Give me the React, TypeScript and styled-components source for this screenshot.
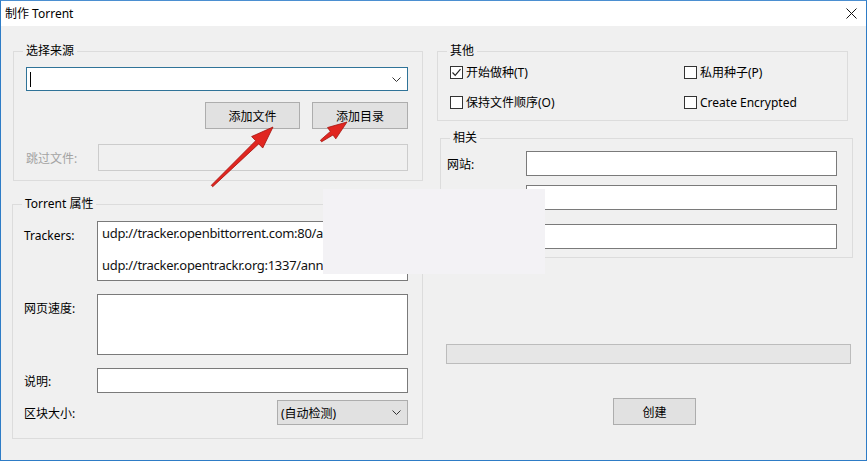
import React from 'react';
import styled, { createGlobalStyle } from 'styled-components';

const GlobalStyle = createGlobalStyle`
  html, body {
    margin: 0;
    padding: 0;
    background: #ffffff;
  }
  * {
    box-sizing: border-box;
  }
`;

const font = `"Segoe UI", "Noto Sans", "Noto Sans CJK SC", sans-serif`;

const Window = styled.div`
  position: relative;
  width: 867px;
  height: 461px;
  border: 1px solid #2e7cc6;
  border-top-color: #4b8fd1;
  background: #f0f0f0;
  font-family: ${font};
  font-size: 12px;
  color: #000;
  display: flex;
  flex-direction: column;
  overflow: hidden;
`;

const TitleBar = styled.div`
  height: 25px;
  flex: none;
  background: #ffffff;
  display: flex;
  align-items: center;
  justify-content: space-between;
  padding: 0 9px 1px 4px;
  font-size: 12px;
`;

const Body = styled.div`
  flex: 1;
  display: flex;
  padding: 17px 0 0 11px;
`;

const LeftColumn = styled.div`
  width: 411px;
  display: flex;
  flex-direction: column;
`;

const RightColumn = styled.div`
  width: 416px;
  margin-left: 14px;
  display: flex;
  flex-direction: column;
`;

const Group = styled.fieldset<{ $mt?: number; $ml?: number; $mr?: number }>`
  margin: ${p => p.$mt ?? 0}px ${p => p.$mr ?? 0}px 0 ${p => p.$ml ?? 0}px;
  padding: 0;
  border: 1px solid #dcdcdc;
  min-width: 0;
`;

const Legend = styled.legend`
  margin-left: 9px;
  padding: 0 3px;
  line-height: 16px;
  height: 16px;
  font-size: 12px;
`;

const GroupBody = styled.div<{ $pad: string }>`
  padding: ${p => p.$pad};
  display: flex;
  flex-direction: column;
`;

const Row = styled.div<{ $mt?: number; $align?: string; $justify?: string }>`
  display: flex;
  align-items: ${p => p.$align ?? 'center'};
  justify-content: ${p => p.$justify ?? 'flex-start'};
  margin-top: ${p => p.$mt ?? 0}px;
`;

const Label = styled.div<{ $w: number; $disabled?: boolean; $pt?: number }>`
  width: ${p => p.$w}px;
  flex: none;
  color: ${p => (p.$disabled ? '#a3a3a3' : '#000')};
  padding-top: ${p => p.$pt ?? 0}px;
  white-space: nowrap;
`;

const Combo = styled.div`
  height: 24px;
  background: #fff;
  border: 1px solid #2f7398;
  display: flex;
  align-items: center;
  justify-content: space-between;
  padding: 0 6px 0 3px;
`;

const Caret = styled.span`
  width: 1px;
  height: 15px;
  background: #000;
`;

const TextBox = styled.div<{ $h: number; $disabled?: boolean }>`
  flex: 1;
  height: ${p => p.$h}px;
  background: ${p => (p.$disabled ? '#f0f0f0' : '#fff')};
  border: 1px solid ${p => (p.$disabled ? '#cccccc' : '#7a7a7a')};
  overflow: hidden;
`;

const TrackerText = styled.div`
  padding: 3px 4px;
  font-size: 13px;
  letter-spacing: -0.3px;
  line-height: 16px;
  white-space: nowrap;
  color: #111;
`;

const TrackerGap = styled.div`
  height: 16px;
`;

const Button = styled.button<{ $w: number; $ml?: number }>`
  width: ${p => p.$w}px;
  height: 27px;
  margin-left: ${p => p.$ml ?? 0}px;
  background: #e1e1e1;
  border: 1px solid #adadad;
  font-family: ${font};
  font-size: 12px;
  color: #000;
  padding: 0;
`;

const Select = styled.div`
  width: 131px;
  height: 25px;
  background: #e1e1e1;
  border: 1px solid #adadad;
  display: flex;
  align-items: center;
  justify-content: space-between;
  padding: 0 6px 0 3px;
`;

const CheckGrid = styled.div`
  display: grid;
  grid-template-columns: 234px 1fr;
  grid-auto-rows: 20px;
  row-gap: 10px;
  padding: 3px 0 8px 12px;
`;

const CheckItem = styled.label`
  display: flex;
  align-items: center;
  gap: 3px;
  white-space: nowrap;
`;

const CheckBox = styled.span`
  width: 13px;
  height: 13px;
  border: 1px solid #333;
  background: #fff;
  display: flex;
  align-items: center;
  justify-content: center;
`;

const Progress = styled.div`
  margin: 86px 0 0 9px;
  width: 405px;
  height: 20px;
  background: #e6e6e6;
  border: 1px solid #bcbcbc;
`;

const Overlay = styled.div`
  position: absolute;
  left: 322px;
  top: 188px;
  width: 222px;
  height: 85px;
  background: #f3f2f5;
`;

const ArrowLayer = styled.svg`
  position: absolute;
  left: 0;
  top: 0;
  width: 865px;
  height: 459px;
  pointer-events: none;
`;

const Chevron = () => (
  <svg width="9" height="5" viewBox="0 0 9 5">
    <path d="M0.5 0.5 L4.5 4.5 L8.5 0.5" fill="none" stroke="#333" strokeWidth="1" />
  </svg>
);

const Check = ({ checked, text }: { checked?: boolean; text: string }) => (
  <CheckItem>
    <CheckBox>
      {checked && (
        <svg width="11" height="11" viewBox="0 0 11 11">
          <path d="M1.5 5.5 L4.2 8.3 L9.5 2.2" fill="none" stroke="#222" strokeWidth="1.2" />
        </svg>
      )}
    </CheckBox>
    {text}
  </CheckItem>
);

// tail -> tip arrow drawn as shaft + head
const Arrow = ({ tail, tip, head, half }: { tail: [number, number]; tip: [number, number]; head: number; half: number }) => {
  const dx = tip[0] - tail[0];
  const dy = tip[1] - tail[1];
  const len = Math.hypot(dx, dy);
  const ux = dx / len;
  const uy = dy / len;
  const px = -uy;
  const py = ux;
  const bx = tip[0] - ux * head;
  const by = tip[1] - uy * head;
  const pts = [
    [tail[0] + px * 1, tail[1] + py * 1],
    [bx + px * 2.2, by + py * 2.2],
    [bx + px * half, by + py * half],
    [tip[0], tip[1]],
    [bx - px * half, by - py * half],
    [bx - px * 2.2, by - py * 2.2],
    [tail[0] - px * 1, tail[1] - py * 1],
  ]
    .map(p => p.join(','))
    .join(' ');
  return <polygon points={pts} fill="#e12620" stroke="#a3130e" strokeWidth="0.8" strokeLinejoin="round" />;
};

const App: React.FC = () => {
  return (
    <>
      <GlobalStyle />
      <Window>
        <TitleBar>
          <span>制作 Torrent</span>
          <svg width="11" height="11" viewBox="0 0 11 11">
            <path d="M0.5 0.5 L10.5 10.5 M10.5 0.5 L0.5 10.5" stroke="#111" strokeWidth="1" />
          </svg>
        </TitleBar>
        <Body>
          <LeftColumn>
            <Group $ml={1}>
              <Legend>选择来源</Legend>
              <GroupBody $pad="8px 14px 9px 12px">
                <Combo>
                  <Caret />
                  <Chevron />
                </Combo>
                <Row $mt={11} $justify="flex-end">
                  <Button $w={95}>添加文件</Button>
                  <Button $w={96} $ml={12}>添加目录</Button>
                </Row>
                <Row $mt={15}>
                  <Label $w={72} $disabled>跳过文件:</Label>
                  <TextBox $h={27} $disabled />
                </Row>
              </GroupBody>
            </Group>
            <Group $mt={15}>
              <Legend>Torrent 属性</Legend>
              <GroupBody $pad="9px 14px 13px 11px">
                <Row $align="flex-start">
                  <Label $w={73} $pt={6}>Trackers:</Label>
                  <TextBox $h={60}>
                    <TrackerText>
                      udp://tracker.openbittorrent.com:80/announce
                      <TrackerGap />
                      udp://tracker.opentrackr.org:1337/announce
                    </TrackerText>
                  </TextBox>
                </Row>
                <Row $mt={13} $align="flex-start">
                  <Label $w={73} $pt={5}>网页速度:</Label>
                  <TextBox $h={61} />
                </Row>
                <Row $mt={13}>
                  <Label $w={73}>说明:</Label>
                  <TextBox $h={25} />
                </Row>
                <Row $mt={7} $justify="space-between">
                  <Label $w={73}>区块大小:</Label>
                  <Select>
                    <span>(自动检测)</span>
                    <Chevron />
                  </Select>
                </Row>
              </GroupBody>
            </Group>
          </LeftColumn>
          <RightColumn>
            <Group $mr={5}>
              <Legend>其他</Legend>
              <CheckGrid>
                <Check checked text="开始做种(T)" />
                <Check text="私用种子(P)" />
                <Check text="保持文件顺序(O)" />
                <Check text="Create Encrypted" />
              </CheckGrid>
            </Group>
            <Group $mt={9} $ml={3}>
              <Legend>相关</Legend>
              <GroupBody $pad="5px 15px 8px 6px">
                <Row>
                  <Label $w={79}>网站:</Label>
                  <TextBox $h={25} />
                </Row>
                <Row $mt={9}>
                  <Label $w={79}>注释:</Label>
                  <TextBox $h={25} />
                </Row>
                <Row $mt={14}>
                  <Label $w={79}>源:</Label>
                  <TextBox $h={25} />
                </Row>
              </GroupBody>
            </Group>
            <Progress />
            <Row $mt={34}>
              <Button $w={83} $ml={176}>创建</Button>
            </Row>
          </RightColumn>
        </Body>
        <Overlay />
        <ArrowLayer viewBox="0 0 865 459">
          <Arrow tail={[211, 185]} tip={[272, 126]} head={22} half={8} />
          <Arrow tail={[320, 140]} tip={[346, 121]} head={19} half={7} />
        </ArrowLayer>
      </Window>
    </>
  );
};

export default App;
